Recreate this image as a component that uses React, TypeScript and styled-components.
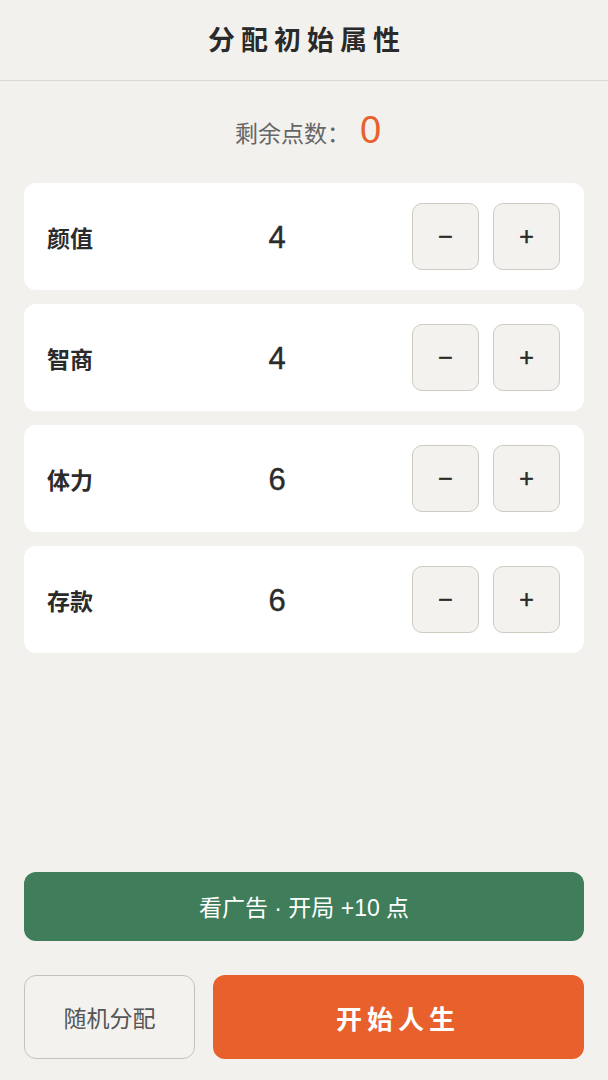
import styled, { createGlobalStyle } from 'styled-components';

const GlobalStyle = createGlobalStyle`
  html, body {
    margin: 0;
    padding: 0;
    background: #f3f1ed;
  }
  body {
    font-family: "Liberation Sans", "Noto Sans CJK SC", sans-serif;
    color: #2b2b2b;
  }
  * {
    box-sizing: border-box;
  }
`;

const attributes = [
  { name: '颜值', value: 4 },
  { name: '智商', value: 4 },
  { name: '体力', value: 6 },
  { name: '存款', value: 6 },
];

export default function App() {
  return (
    <>
      <GlobalStyle />
      <Page>
        <Header>
          <Title>分配初始属性</Title>
        </Header>
        <Remaining>
          <RemainingLabel>剩余点数：</RemainingLabel>
          <RemainingValue>0</RemainingValue>
        </Remaining>
        <List>
          {attributes.map((attr) => (
            <Card key={attr.name}>
              <AttrName>{attr.name}</AttrName>
              <AttrValue>{attr.value}</AttrValue>
              <Controls>
                <StepButton>−</StepButton>
                <StepButton>+</StepButton>
              </Controls>
            </Card>
          ))}
        </List>
        <Spacer />
        <Footer>
          <AdButton>看广告 · 开局 +10 点</AdButton>
          <BottomRow>
            <RandomButton>随机分配</RandomButton>
            <StartButton>开始人生</StartButton>
          </BottomRow>
        </Footer>
      </Page>
    </>
  );
}

const Page = styled.div`
  min-height: 100vh;
  display: flex;
  flex-direction: column;
`;

const Header = styled.header`
  height: 81px;
  display: flex;
  align-items: center;
  justify-content: center;
  border-bottom: 1px solid #dcd8d2;
`;

const Title = styled.h1`
  margin: 0 0 4px;
  font-family: "Noto Sans CJK SC", sans-serif;
  font-size: 27px;
  font-weight: 700;
  letter-spacing: 6px;
  padding-left: 6px;
  color: #2a2a2a;
`;

const Remaining = styled.div`
  height: 102px;
  display: flex;
  align-items: center;
  justify-content: center;
  gap: 10px;
  padding-left: 8px;
`;

const RemainingLabel = styled.span`
  font-family: "Noto Sans CJK SC", sans-serif;
  font-size: 23px;
  color: #666;
`;

const RemainingValue = styled.span`
  font-family: "Liberation Sans", sans-serif;
  font-size: 38px;
  color: #e8602c;
  margin-top: -4px;
`;

const List = styled.div`
  display: flex;
  flex-direction: column;
  gap: 14px;
  padding: 0 24px;
`;

const Card = styled.div`
  height: 107px;
  background: #ffffff;
  border-radius: 12px;
  display: flex;
  align-items: center;
  padding: 0 24px 0 23px;
`;

const AttrName = styled.span`
  width: 170px;
  font-family: "Noto Sans CJK SC", sans-serif;
  font-size: 23px;
  font-weight: 700;
  color: #2b2b2b;
`;

const AttrValue = styled.span`
  width: 120px;
  text-align: center;
  font-size: 31px;
  color: #2b2b2b;
  margin-top: 3px;
  -webkit-text-stroke: 0.4px #2b2b2b;
`;

const Controls = styled.div`
  margin-left: auto;
  display: flex;
  gap: 14px;
`;

const StepButton = styled.button`
  width: 67px;
  height: 67px;
  border: 1.5px solid #cfcac2;
  border-radius: 10px;
  background: #f4f2ee;
  font-family: "Liberation Sans", sans-serif;
  font-size: 25px;
  color: #2b2b2b;
  -webkit-text-stroke: 0.5px #2b2b2b;
  display: flex;
  align-items: center;
  justify-content: center;
  padding: 0;
`;

const Spacer = styled.div`
  flex: 1;
`;

const Footer = styled.div`
  display: flex;
  flex-direction: column;
  gap: 34px;
  padding: 0 24px 21px;
`;

const AdButton = styled.button`
  height: 69px;
  border: none;
  border-radius: 12px;
  background: #3f7d5b;
  color: #ffffff;
  font-family: "Liberation Sans", "Noto Sans CJK SC", sans-serif;
  font-size: 23px;
  padding-bottom: 2px;
`;

const BottomRow = styled.div`
  display: flex;
  gap: 18px;
`;

const RandomButton = styled.button`
  width: 171px;
  height: 84px;
  border: 1.5px solid #c6c1ba;
  border-radius: 12px;
  background: #f4f2ee;
  color: #555;
  font-family: "Noto Sans CJK SC", sans-serif;
  font-size: 23px;
`;

const StartButton = styled.button`
  flex: 1;
  height: 84px;
  border: none;
  border-radius: 12px;
  background: #e8602c;
  color: #ffffff;
  font-family: "Noto Sans CJK SC", sans-serif;
  font-size: 26px;
  font-weight: 700;
  letter-spacing: 5px;
  padding-left: 5px;
`;
